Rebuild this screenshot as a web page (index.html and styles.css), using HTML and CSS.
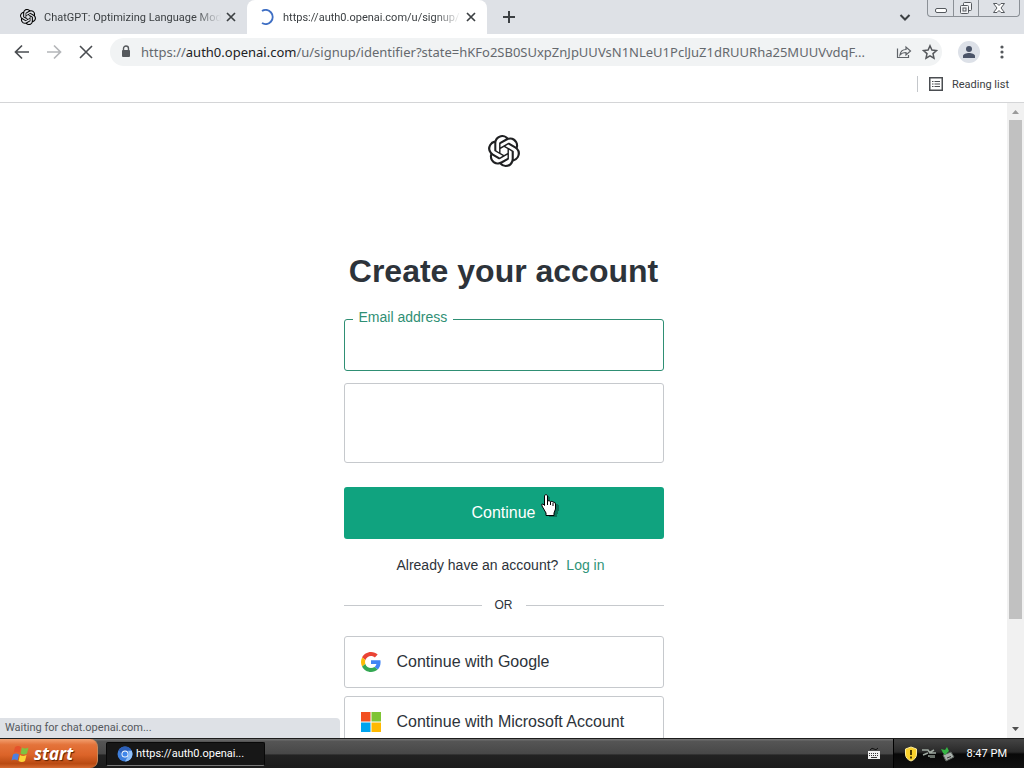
FILE: index.html
```html
<!DOCTYPE html>
<html lang="en">
<head>
<meta charset="utf-8">
<title>Create your account</title>
<link rel="stylesheet" href="styles.css">
</head>
<body>
<svg class="defs" aria-hidden="true">
  <symbol id="knot" viewBox="0 0 24 24"><path d="M22.2819 9.8211a5.9847 5.9847 0 0 0-.5157-4.9108 6.0462 6.0462 0 0 0-6.5098-2.9A6.0651 6.0651 0 0 0 4.9807 4.1818a5.9847 5.9847 0 0 0-3.9977 2.9 6.0462 6.0462 0 0 0 .7427 7.0966 5.98 5.98 0 0 0 .511 4.9107 6.051 6.051 0 0 0 6.5146 2.9001A5.9847 5.9847 0 0 0 13.2599 24a6.0557 6.0557 0 0 0 5.7718-4.2058 5.9894 5.9894 0 0 0 3.9977-2.9001 6.0557 6.0557 0 0 0-.7475-7.0729zm-9.022 12.6081a4.4755 4.4755 0 0 1-2.8764-1.0408l.1419-.0804 4.7783-2.7582a.7948.7948 0 0 0 .3927-.6813v-6.7369l2.02 1.1686a.071.071 0 0 1 .038.052v5.5826a4.504 4.504 0 0 1-4.4945 4.4944zm-9.6607-4.1254a4.4708 4.4708 0 0 1-.5346-3.0137l.142.0852 4.783 2.7582a.7712.7712 0 0 0 .7806 0l5.8428-3.3685v2.3324a.0804.0804 0 0 1-.0332.0615L9.74 19.9502a4.4992 4.4992 0 0 1-6.1408-1.6464zM2.3408 7.8956a4.485 4.485 0 0 1 2.3655-1.9728V11.6a.7664.7664 0 0 0 .3879.6765l5.8144 3.3543-2.0201 1.1685a.0757.0757 0 0 1-.071 0l-4.8303-2.7865A4.504 4.504 0 0 1 2.3408 7.872zm16.5963 3.8558L13.1038 8.364 15.1192 7.2a.0757.0757 0 0 1 .071 0l4.8303 2.7913a4.4944 4.4944 0 0 1-.6765 8.1042v-5.6772a.79.79 0 0 0-.407-.667zm2.0107-3.0231l-.142-.0852-4.7735-2.7818a.7759.7759 0 0 0-.7854 0L9.409 9.2297V6.8974a.0662.0662 0 0 1 .0284-.0615l4.8303-2.7866a4.4992 4.4992 0 0 1 6.6802 4.66zM8.3065 12.863l-2.02-1.1638a.0804.0804 0 0 1-.038-.0567V6.0742a4.4992 4.4992 0 0 1 7.3757-3.4537l-.142.0805L8.704 5.459a.7948.7948 0 0 0-.3927.6813zm1.0976-2.3654l2.602-1.4998 2.6069 1.4998v2.9994l-2.5974 1.4997-2.6067-1.4997Z"/></symbol>
  <symbol id="cross" viewBox="0 0 16 16"><path d="M4 4l8 8M12 4l-8 8" fill="none" stroke="currentColor" stroke-width="1.700"/></symbol>
</svg>

<header class="browser">
  <div class="tabstrip">
    <div class="tab">
      <svg class="icon16"><use href="#knot"/></svg>
      <span class="tab-title">ChatGPT: Optimizing Language Mod</span>
      <button class="bare" aria-label="Close tab"><svg class="icon16"><use href="#cross"/></svg></button>
    </div>
    <div class="tab tab-active">
      <svg class="icon16" viewBox="0 0 16 16"><path d="M3 2A7 7 0 1 1 3 14" fill="none" stroke="#3f6fc4" stroke-width="2"/></svg>
      <span class="tab-title">https://auth0.openai.com/u/signup/</span>
      <button class="bare" aria-label="Close tab"><svg class="icon16"><use href="#cross"/></svg></button>
    </div>
    <button class="bare new-tab" aria-label="New tab"><svg class="icon16" viewBox="0 0 16 16"><path d="M8 2v12M2 8h12" fill="none" stroke="currentColor" stroke-width="2"/></svg></button>
    <button class="bare tab-search" aria-label="Search tabs"><svg class="icon16" viewBox="0 0 16 16"><path d="M3.500 6l4.500 4.500L12.500 6" fill="none" stroke="currentColor" stroke-width="2"/></svg></button>
    <div class="window-buttons">
      <button class="bare" aria-label="Minimize"><svg width="14" height="16" viewBox="0 0 14 16"><rect x="1.500" y="8.500" width="11" height="4" rx="1.500" fill="#fff" stroke="#55595e"/></svg></button>
      <button class="bare" aria-label="Restore"><svg width="14" height="16" viewBox="0 0 14 16" fill="#f4f5f7" stroke="#55595e"><rect x="4.500" y="2.500" width="8" height="8" rx="1"/><rect x="1.500" y="5.500" width="8" height="8" rx="1"/><rect x="4" y="8" width="3" height="3"/></svg></button>
      <button class="bare window-close" aria-label="Close"><svg width="14" height="16" viewBox="0 0 14 16"><path d="M1.500 3.500h3.500l2 2 2-2h3.500L9 8l3.500 4.500H9l-2-2-2 2H1.500L5 8z" fill="#fff" stroke="#55595e"/></svg></button>
    </div>
  </div>

  <div class="toolbar">
    <button class="bare" aria-label="Back"><svg class="icon16" viewBox="0 0 16 16"><path d="M15 8H2M8 1.500L1.500 8 8 14.500" fill="none" stroke="#4a4d51" stroke-width="1.700"/></svg></button>
    <button class="bare" aria-label="Forward"><svg class="icon16" viewBox="0 0 16 16"><path d="M1 8h13M8 1.500L14.500 8 8 14.500" fill="none" stroke="#b4b6b9" stroke-width="1.700"/></svg></button>
    <button class="bare" aria-label="Stop"><svg class="icon16" viewBox="0 0 16 16"><path d="M2 2l12 12M14 2L2 14" fill="none" stroke="#4a4d51" stroke-width="1.600"/></svg></button>
    <div class="omnibox">
      <svg width="10" height="14" viewBox="0 0 10 14"><path d="M2.500 6V3.500a2.500 2.500 0 0 1 5 0V6" fill="none" stroke="#55585c" stroke-width="1.400"/><rect x="1" y="5" width="8" height="7" rx="1" fill="#55585c"/></svg>
      <span class="url">https://<b>auth0.openai.com</b>/u/signup/identifier?state=hKFo2SB0SUxpZnJpUUVsN1NLeU1PclJuZ1dRUURha25MUUVvdqF...</span>
      <button class="bare" aria-label="Share"><svg class="icon16" viewBox="0 0 16 16"><path d="M1.500 4.500v9h11V11M4 11c.5-4 3-5.500 6-5.500V3l4.500 4-4.500 4V8.500C7.500 8.500 5.500 9 4 11z" fill="none" stroke="#5f6368" stroke-width="1.200"/></svg></button>
      <button class="bare" aria-label="Bookmark this page"><svg class="icon16" viewBox="0 0 16 16"><path d="M8 1.800l1.900 4.300 4.600.4-3.500 3.100 1 4.600L8 11.800l-4 2.400 1-4.600L1.500 6.500l4.600-.4z" fill="none" stroke="#55585c" stroke-width="1.500"/></svg></button>
    </div>
    <button class="bare" aria-label="Profile"><svg width="22" height="22" viewBox="0 0 22 22"><circle cx="11" cy="11" r="11" fill="#dde1e8"/><circle cx="11" cy="8" r="3" fill="#4b5468"/><path d="M5 17v-2c0-2 3.500-3 6-3s6 1 6 3v2z" fill="#4b5468"/></svg></button>
    <button class="bare" aria-label="Menu"><svg class="icon16" viewBox="0 0 16 16" fill="#55585c"><circle cx="8" cy="3" r="1.600"/><circle cx="8" cy="8" r="1.600"/><circle cx="8" cy="13" r="1.600"/></svg></button>
  </div>

  <div class="bookmarks">
    <button class="bare reading-list">
      <svg class="icon16" viewBox="0 0 16 16"><rect x="1.750" y="1.750" width="12.500" height="12.500" fill="none" stroke="#4a4d51" stroke-width="1.500"/><path d="M4 5.500h1.500M6.500 5.500H12M4 8h1.500M6.500 8H12M4 10.500h1.500M6.500 10.500H12" stroke="#4a4d51" stroke-width="1.200"/></svg>
      Reading list
    </button>
  </div>
</header>

<div class="viewport">
  <main class="page">
    <svg class="brand" role="img" aria-label="OpenAI"><use href="#knot"/></svg>
    <h1>Create your account</h1>
    <form class="signup">
      <div class="field">
        <label for="email">Email address</label>
        <input id="email" type="email">
      </div>
      <div class="challenge"></div>
      <button class="primary" type="button">Continue
        <svg class="pointer" width="20" height="26" viewBox="0 0 20 26"><path d="M5 2h2v1h1v5h3v1h3v1h2v1h1v6h-1v3h-1v3H7v-2H6v-2H5v-2H4v-2H3v-2H2v-3h2v1h1z" fill="#063d30" opacity=".5" transform="translate(2 1)"/><path d="M4.500 2.500q1.500-2 3 0V8q1.500-1 3 .500 1.500-.5 2.500.500 2.500 0 2.500 2v5l-1.500 4v2.500h-8V20l-4-7q-1-2.500 1-2l1.500 1.500z" fill="#fff" stroke="#000"/><path d="M7.500 8v4M10.500 9v3M13 10v3" stroke="#000"/></svg>
      </button>
      <p class="login">Already have an account? <a href="#">Log in</a></p>
      <div class="divider">OR</div>
      <button class="social" type="button">
        <svg width="20" height="20" viewBox="0 0 48 48"><path fill="#ea4335" d="M24 9.500c3.540 0 6.710 1.220 9.210 3.600l6.850-6.850C35.900 2.380 30.470 0 24 0 14.620 0 6.510 5.380 2.560 13.220l7.980 6.190C12.430 13.720 17.740 9.500 24 9.500z"/><path fill="#4285f4" d="M46.980 24.550c0-1.570-.15-3.090-.38-4.550H24v9.020h12.940c-.58 2.960-2.260 5.480-4.780 7.180l7.730 6c4.510-4.180 7.090-10.360 7.090-17.650z"/><path fill="#fbbc05" d="M10.530 28.590c-.48-1.450-.76-2.990-.76-4.590s.27-3.140.76-4.590l-7.980-6.190C.92 16.460 0 20.120 0 24c0 3.880.92 7.540 2.560 10.780l7.970-6.190z"/><path fill="#34a853" d="M24 48c6.480 0 11.930-2.130 15.890-5.810l-7.730-6c-2.150 1.450-4.920 2.300-8.160 2.300-6.260 0-11.570-4.220-13.470-9.910l-7.980 6.190C6.510 42.620 14.620 48 24 48z"/></svg>
        Continue with Google
      </button>
      <button class="social" type="button">
        <svg width="20" height="20" viewBox="0 0 20 20"><path fill="#f25022" d="M0 0h9.500v9.500H0z"/><path fill="#7fc434" d="M10.500 0H20v9.500h-9.500z"/><path fill="#00a4ef" d="M0 10.500h9.500V20H0z"/><path fill="#ffb900" d="M10.500 10.500H20V20h-9.500z"/></svg>
        Continue with Microsoft Account
      </button>
    </form>
  </main>
  <div class="scrollbar">
    <svg width="9" height="5" viewBox="0 0 9 5"><path d="M1 5l3.500-4L8 5z" fill="#9a9a9a"/></svg>
    <div class="track"><div class="thumb"></div></div>
    <svg width="9" height="5" viewBox="0 0 9 5"><path d="M1 0l3.500 4L8 0z" fill="#505050"/></svg>
  </div>
  <div class="status">Waiting for chat.openai.com...</div>
</div>

<footer class="taskbar">
  <button class="bare start">
    <svg width="20" height="20" viewBox="0 0 20 20"><path d="M5 3q3-2 6 0L9.500 9q-3-2-6 0z" fill="#e5532c"/><path d="M12 3.500q3 2 6.500 0L17 9.500q-3 2-6.500 0z" fill="#7fc241"/><path d="M3 10.500q3-2 6 0L7.500 16.500q-3-2-6 0z" fill="#4d7fe0"/><path d="M10 11q3 2 6.500 0L15 17q-3 2-6.500 0z" fill="#fbd437"/></svg>
    start
  </button>
  <button class="bare task">
    <svg class="icon16" viewBox="0 0 16 16"><circle cx="8" cy="8" r="7.500" fill="#3e7fdc"/><path d="M8 .5a7.500 7.500 0 0 1 6.700 4.200H8a3.500 3.500 0 0 0-3.400 3L1.700 4A7.500 7.500 0 0 1 8 .5z" fill="#2c5fb8"/><path d="M14.700 4.700A7.500 7.500 0 0 1 8 15.500l3.200-5.800a4 4 0 0 0-.2-5z" fill="#8fc0fa"/><circle cx="8" cy="8" r="3.500" fill="#fff"/><circle cx="8" cy="8" r="2.600" fill="#3f86ea"/></svg>
    https://auth0.openai...
  </button>
  <svg class="keyboard" width="14" height="14" viewBox="0 0 14 14"><path d="M3 3q2-3 4-1t4-1" fill="none" stroke="#111"/><rect x="1" y="4" width="12" height="8" fill="#eee"/><path d="M2 6.500h10M2 8.500h10" stroke="#333" stroke-dasharray="1 1"/><path d="M4 10.500h6" stroke="#333"/></svg>
  <div class="tray">
    <svg width="14" height="16" viewBox="0 0 14 16"><path d="M7 1l5.500 2v5q0 5-5.500 7Q1.500 13 1.500 8V3z" fill="#f9d02b" stroke="#fbeb9a"/><path d="M7 4v5M7 10.500v2" stroke="#4b3a00" stroke-width="2"/></svg>
    <svg class="icon16" viewBox="0 0 16 16"><path d="M1 4h6l2 3h6M2 9l5-2M8 7l5-3M7 10h7" fill="none" stroke="#9fa9a1" stroke-width="1.500"/><path d="M8 9h6v3H9z" fill="#687069"/></svg>
    <svg class="icon16" viewBox="0 0 16 16"><path d="M3 9l8-3 3 5-8 4z" fill="#a9b0ab" stroke="#59605b"/><path d="M7 12l4-1.500" stroke="#333"/><path d="M1 3l4 1 2-3 2 4-4 4-2-2z" fill="#35b544"/></svg>
    <time>8:47 PM</time>
  </div>
</footer>
</body>
</html>
```
FILE: styles.css
```css
* { box-sizing: border-box; }

body {
  margin: 0;
  height: 100vh;
  display: flex;
  flex-direction: column;
  overflow: hidden;
  background: #fff;
  color: #2d333a;
  font-family: "Liberation Sans", Arial, sans-serif;
}

svg { flex: none; display: block; }
.defs { position: absolute; width: 0; height: 0; }
.icon16 { width: 16px; height: 16px; }

.bare {
  flex: none;
  display: flex;
  align-items: center;
  padding: 0;
  border: 0;
  background: none;
  color: inherit;
  font: inherit;
}

.browser, .status, .taskbar { font-family: Tahoma, Roboto, sans-serif; font-size: 11px; }
.browser { border-bottom: 1px solid #d4d5d7; color: #3c4043; }

.tabstrip {
  display: flex;
  height: 34px;
  background: #dee1e6;
}
.tab {
  display: flex;
  align-items: center;
  gap: 8px;
  width: 247px;
  padding: 0 8px 0 20px;
  border-radius: 0 0 8px 0;
}
.tab-active {
  width: 240px;
  padding-left: 12px;
  border-radius: 8px 8px 0 0;
  background: #fff;
}
.tab-title {
  flex: 1;
  min-width: 0;
  margin-right: -6px;
  overflow: hidden;
  white-space: nowrap;
  mask-image: linear-gradient(to right, #000 85%, transparent);
}
.new-tab { margin-left: 14px; }
.tab-search { margin-left: auto; }
.window-buttons {
  display: flex;
  height: 17px;
  margin: 0 4px 0 14px;
  border: 1px solid #8b9096;
  border-top: 0;
  border-radius: 0 0 4px 4px;
}
.window-buttons button { width: 25px; justify-content: center; }
.window-buttons button + button { border-left: 1px solid #8b9096; }
.window-buttons .window-close { width: 41px; }

.toolbar {
  display: flex;
  align-items: center;
  gap: 16px;
  height: 36px;
  padding: 0 14px;
}
.toolbar > .bare:last-child { margin-left: -2px; }
.omnibox {
  flex: 1;
  min-width: 0;
  display: flex;
  align-items: center;
  gap: 16px;
  height: 28px;
  padding: 0 10px 0 11px;
  border-radius: 14px;
  background: #f1f3f4;
}
.omnibox svg:first-child { margin-right: -6px; }
.url {
  flex: 1;
  min-width: 0;
  margin-right: -12px;
  overflow: hidden;
  white-space: nowrap;
  font-family: "Noto Sans", sans-serif;
  font-size: 13px;
  color: #65696e;
}
.url b { font-weight: 400; color: #202124; }

.bookmarks {
  display: flex;
  justify-content: flex-end;
  align-items: center;
  height: 32px;
  padding: 0 15px 4px 0;
}
.reading-list {
  gap: 8px;
  padding-left: 10px;
  border-left: 1px solid #c4c7cb;
}

.viewport { position: relative; flex: 1; min-height: 0; display: flex; }
.page {
  flex: 1;
  display: flex;
  flex-direction: column;
  align-items: center;
  padding-top: 32px;
  overflow: hidden;
}
.brand { width: 32px; height: 32px; fill: #202123; }
h1 {
  margin: 84px 0 28px;
  font-size: 32px;
  line-height: 40px;
}
.signup { width: 100%; max-width: 320px; }

.field { position: relative; }
.field label {
  position: absolute;
  top: -10px;
  left: 9px;
  padding: 0 6px;
  background: #fff;
  color: #2f8f74;
  font-size: 14px;
  line-height: 16px;
}
.field input {
  display: block;
  width: 100%;
  height: 52px;
  padding: 0 16px;
  border: 1px solid #2f8f74;
  border-radius: 3px;
  font: inherit;
}
.challenge {
  height: 80px;
  margin: 12px 0 24px;
  border: 1px solid #c6c9cd;
  border-radius: 3px;
}
.primary {
  position: relative;
  display: block;
  width: 100%;
  height: 52px;
  border: 0;
  border-radius: 3px;
  background: #10a37f;
  color: #fff;
  font: inherit;
  font-size: 16px;
}
.pointer { position: absolute; top: 6px; left: 196px; }
.login {
  display: flex;
  justify-content: center;
  gap: 8px;
  margin: 16px 0 20px;
  padding-right: 6px;
  font-size: 14px;
  line-height: 20px;
}
.login a { color: #2f9478; text-decoration: none; }
.divider {
  display: flex;
  align-items: center;
  gap: 13px;
  margin-bottom: 20px;
  font-size: 12px;
  line-height: 21px;
}
.divider::before, .divider::after {
  content: "";
  flex: 1;
  height: 1px;
  background: #c6c9cd;
}
.social {
  display: flex;
  align-items: center;
  gap: 16px;
  width: 100%;
  height: 52px;
  margin-bottom: 8px;
  padding: 0 16px;
  border: 1px solid #c6c9cd;
  border-radius: 3px;
  background: #fff;
  color: #2d333a;
  font: inherit;
  font-size: 16px;
}

.scrollbar {
  width: 17px;
  display: flex;
  flex-direction: column;
  align-items: center;
  gap: 6px;
  padding: 6px 0;
  background: #f1f1f1;
}
.track { flex: 1; width: 13px; }
.thumb { height: 83%; background: #c1c1c1; }

.status {
  position: absolute;
  left: 0;
  bottom: 0;
  width: 340px;
  padding-left: 5px;
  border-radius: 0 4px 0 0;
  background: #dee1e6;
  color: #54585d;
  line-height: 20px;
}

.taskbar {
  display: flex;
  align-items: center;
  height: 30px;
  border-top: 1px solid #1c1c1c;
  background: linear-gradient(#777 0, #555 8%, #484848 50%, #222 56%, #1c1c1c);
  color: #fff;
}
.start {
  align-self: stretch;
  gap: 4px;
  width: 98px;
  padding-left: 10px;
  border-right: 1px solid #c98859;
  border-radius: 0 8px 8px 0;
  background: linear-gradient(#f2a070, #e4733a 20%, #dc6429 55%, #b94a12 85%, #d56a31);
  font: italic bold 17px/20px "Open Sans", sans-serif;
  text-shadow: 1px 1px 1px #5b2000;
}
.task {
  width: 159px;
  height: 24px;
  margin-left: 8px;
  padding-left: 10px;
  gap: 3px;
  border: 1px solid #080808;
  border-bottom-color: #777;
  border-radius: 2px;
  background: #171717;
}
.keyboard { margin-left: auto; }
.tray {
  align-self: stretch;
  display: flex;
  align-items: center;
  gap: 3px;
  margin-left: 12px;
  padding: 0 17px 0 10px;
  border-left: 1px solid #000;
  background: linear-gradient(#444, #292929 45%, #080808 52%, #111);
}
.tray time { margin-left: 8px; }
.omnibox .bare:last-child { margin-left: 0; }
```
